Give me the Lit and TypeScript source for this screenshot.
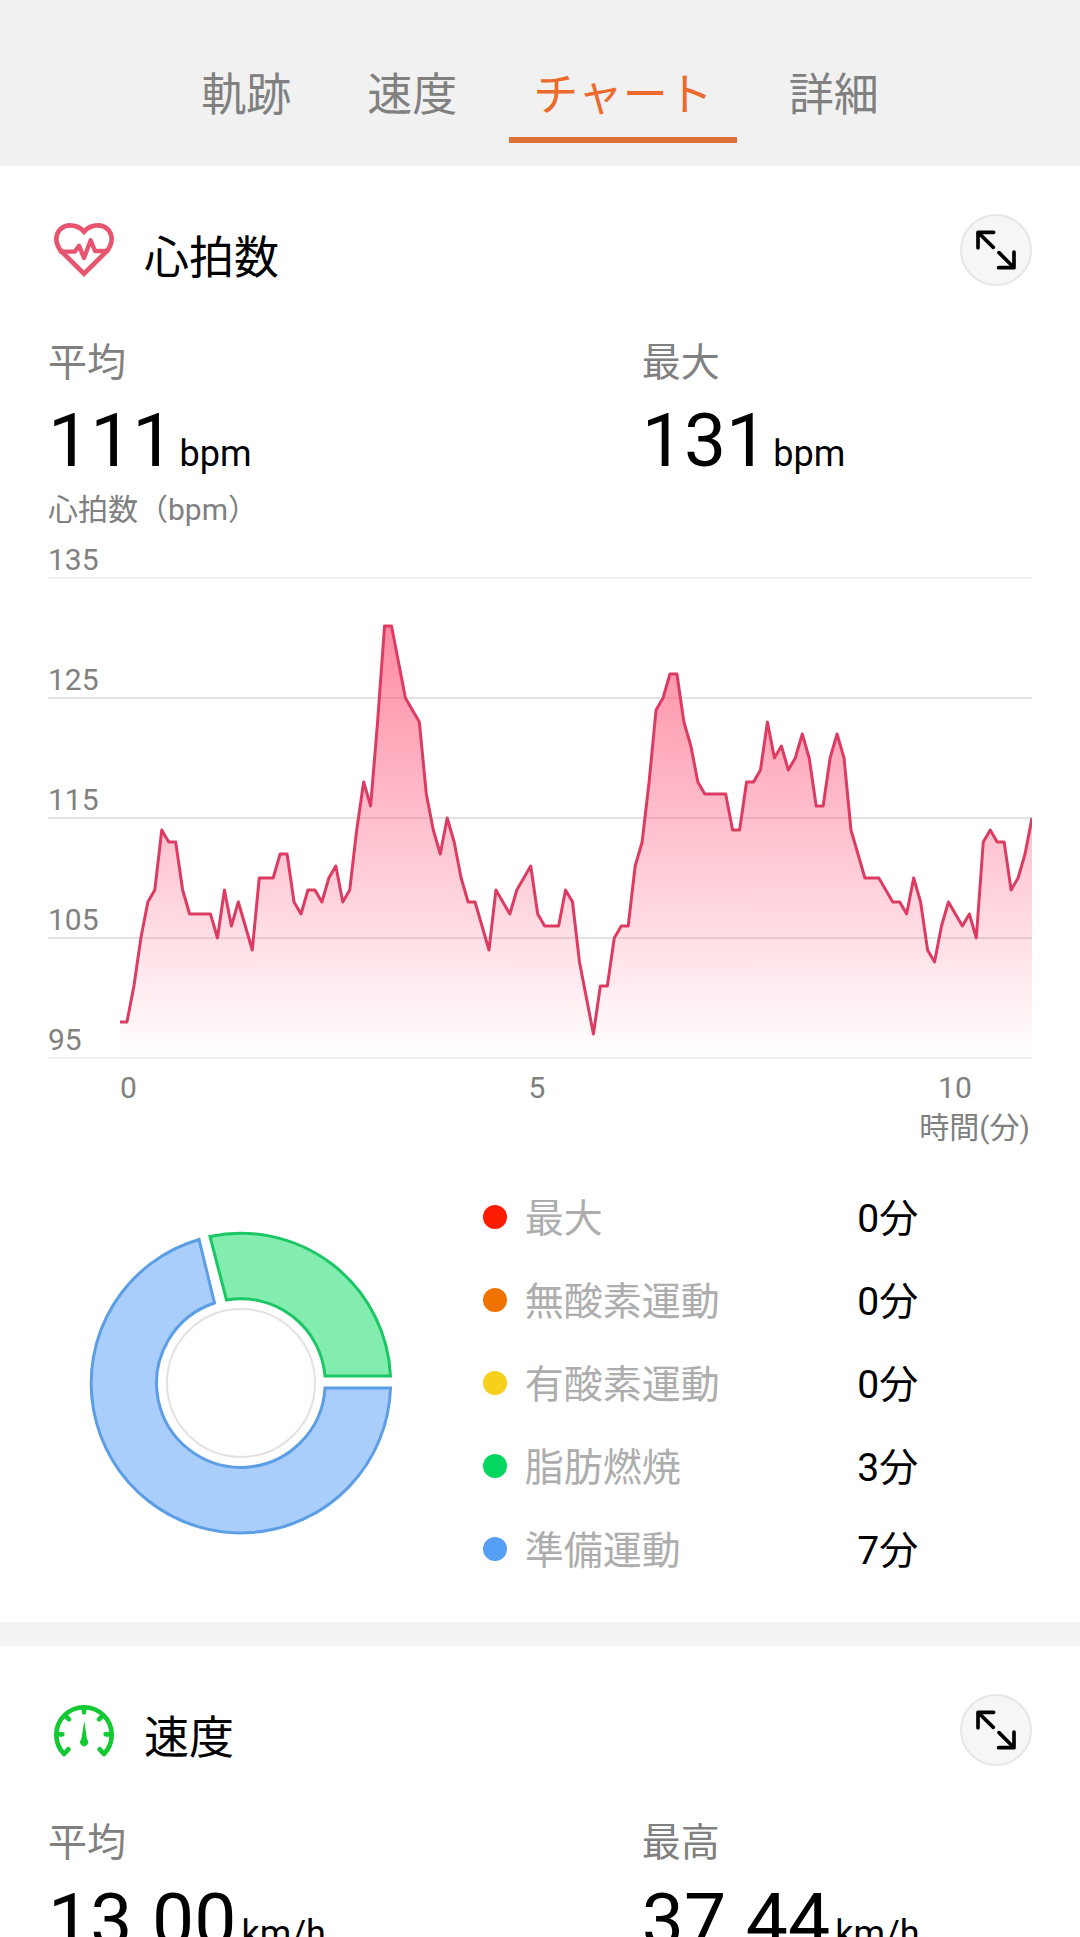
import { LitElement, html, css, svg } from "lit";
import { customElement, property, state } from "lit/decorators.js";
import { classMap } from "lit/directives/class-map.js";

const TABS = ["軌跡", "速度", "チャート", "詳細"];

interface Stat {
  label: string;
  value: string;
  unit: string;
}

const HEART_STATS: Stat[] = [
  { label: "平均", value: "111", unit: "bpm" },
  { label: "最大", value: "131", unit: "bpm" },
];

const SPEED_STATS: Stat[] = [
  { label: "平均", value: "13.00", unit: "km/h" },
  { label: "最高", value: "37.44", unit: "km/h" },
];

const ZONES = [
  { name: "最大", minutes: 0, tone: "max" },
  { name: "無酸素運動", minutes: 0, tone: "anaerobic" },
  { name: "有酸素運動", minutes: 0, tone: "aerobic" },
  { name: "脂肪燃焼", minutes: 3, tone: "burn" },
  { name: "準備運動", minutes: 7, tone: "warmup" },
];

/* Heart rate samples, evenly spaced in time. */
const BPM = [
  98, 98, 101, 105, 108, 109, 114, 113, 113, 109, 107, 107, 107, 107, 105, 109, 106, 108, 106, 104,
  110, 110, 110, 112, 112, 108, 107, 109, 109, 108, 110, 111, 108, 109, 114, 118, 116, 123, 131, 131,
  128, 125, 124, 123, 117, 114, 112, 115, 113, 110, 108, 108, 106, 104, 109, 108, 107, 109, 110, 111,
  107, 106, 106, 106, 109, 108, 103, 100, 97, 101, 101, 105, 106, 106, 111, 113, 118, 124, 125, 127,
  127, 123, 121, 118, 117, 117, 117, 117, 114, 114, 118, 118, 119, 123, 120, 121, 119, 120, 122, 120,
  116, 116, 120, 122, 120, 114, 112, 110, 110, 110, 109, 108, 108, 107, 110, 108, 104, 103, 106, 108,
  107, 106, 107, 105, 113, 114, 113, 113, 109, 110, 112, 115,
];

const BPM_TICKS = [135, 125, 115, 105, 95];

@customElement("stat-pair")
class StatPair extends LitElement {
  @property({ attribute: false }) stats: Stat[] = [];

  static styles = css`
    :host {
      display: block;
    }
    .stats {
      display: grid;
      grid-template-columns: 35fr 23fr;
      margin: 0;
    }
    .label {
      font-size: 39px;
      line-height: 56px;
      color: #808080;
    }
    .reading {
      margin: 0;
      font-size: 75px;
      line-height: 99px;
      white-space: nowrap;
    }
    .unit {
      margin-left: 5px;
      font-size: 36px;
      line-height: 40px;
    }
  `;

  render() {
    return html`<dl class="stats">
      ${this.stats.map(
        (s) => html`<div>
          <dt class="label">${s.label}</dt>
          <dd class="reading">${s.value}<span class="unit">${s.unit}</span></dd>
        </div>`
      )}
    </dl>`;
  }
}

@customElement("card-heading")
class CardHeading extends LitElement {
  @property() heading = "";

  static styles = css`
    :host {
      display: flex;
      align-items: center;
      height: 72px;
      padding-left: 4px;
      margin-bottom: 49px;
    }
    .title {
      flex: 1;
      margin: 0;
      padding: 18px 0 0 28px;
      font-size: 45px;
      line-height: 54px;
      font-weight: 400;
    }
    .expand {
      display: grid;
      place-items: center;
      width: 72px;
      height: 72px;
      padding: 0;
      border: 2px solid #e6e6e6;
      border-radius: 50%;
      background: #f6f6f6;
      color: #000;
    }
    .arrows {
      display: block;
      width: 40px;
      height: 40px;
      fill: none;
      stroke: currentColor;
      stroke-width: 11;
      stroke-linecap: round;
      stroke-linejoin: round;
    }
  `;

  render() {
    return html`
      <slot></slot>
      <h2 class="title">${this.heading}</h2>
      <button class="expand" type="button" aria-label="拡大">
        <svg class="arrows" viewBox="108 90 120 120" aria-hidden="true">
          <path d="M114 143V97H161M116 99L160 142M222 156V203H176M220 201L177 158" />
        </svg>
      </button>
    `;
  }
}

@customElement("heart-chart")
class HeartChart extends LitElement {
  static styles = css`
    :host {
      display: block;
      color: #808080;
    }
    .caption {
      font-size: 30px;
      line-height: 40px;
    }
    .chart {
      position: relative;
    }
    .tick {
      display: flex;
      align-items: flex-end;
      box-sizing: border-box;
      height: 120px;
      border-bottom: 2px solid #e3e3e3;
      font-size: 30px;
      line-height: 34px;
    }
    .tick:first-child {
      height: 49px;
    }
    .tick.edge {
      border-color: #f1f1f1;
    }
    .plot {
      position: absolute;
      inset: 48px 0 1px 72px;
    }
    .curve {
      display: block;
      width: 100%;
      height: 100%;
    }
    .line {
      fill: none;
      stroke: #dc3c62;
      stroke-width: 3;
      stroke-linejoin: round;
      vector-effect: non-scaling-stroke;
    }
    .axis {
      display: grid;
      grid-template-columns: 208fr 417fr 132fr 154fr;
      padding: 9px 0 0 72px;
      font-size: 30px;
      line-height: 40px;
    }
    .mid {
      text-align: center;
    }
    .last {
      grid-column: 4;
      text-align: center;
    }
    .time {
      padding-right: 2px;
      text-align: right;
    }
  `;

  render() {
    const last = BPM.length - 1;
    const points = BPM.map((v, i) => `${i},${135 - v}`).join(" ");
    return html`
      <div class="caption">心拍数（bpm）</div>
      <div class="chart">
        ${BPM_TICKS.map(
          (t, i) =>
            html`<div class=${classMap({ tick: true, edge: i === 0 || i === BPM_TICKS.length - 1 })}>${t}</div>`
        )}
        <div class="plot">
          <svg class="curve" viewBox="0 0 ${last} 40" preserveAspectRatio="none" aria-hidden="true">
            ${svg`
              <defs>
                <linearGradient id="fade" gradientUnits="userSpaceOnUse" x1="0" y1="4" x2="0" y2="40">
                  <stop offset="0" stop-color="#ff4a70" stop-opacity="0.64" />
                  <stop offset="1" stop-color="#ff4a70" stop-opacity="0" />
                </linearGradient>
              </defs>
              <polygon fill="url(#fade)" points="0,40 ${points} ${last},40" />
              <polyline class="line" points=${points} />
            `}
          </svg>
        </div>
      </div>
      <div class="axis">
        <span>0</span>
        <span class="mid">5</span>
        <span class="last">10</span>
      </div>
      <div class="caption time">時間(分)</div>
    `;
  }
}

@customElement("zone-summary")
class ZoneSummary extends LitElement {
  static styles = css`
    :host {
      display: grid;
      grid-template-columns: 19fr 24fr;
      align-items: center;
      margin-top: 27px;
    }
    .donut {
      display: block;
      width: 304px;
      height: 304px;
      margin-left: 41px;
      stroke-width: 3;
    }
    .hole {
      fill: none;
      stroke: #e6e0e1;
      stroke-width: 2;
    }
    .slice-burn {
      fill: #82edae;
      stroke: #1bc765;
    }
    .slice-warmup {
      fill: #aacefb;
      stroke: #5c9ee5;
    }
    .zones {
      margin: 0;
      padding: 0;
      list-style: none;
    }
    .zone {
      display: grid;
      grid-template-columns: 24px 9fr 5fr;
      column-gap: 18px;
      align-items: center;
      height: 83px;
      font-size: 39px;
      line-height: 56px;
    }
    .dot {
      width: 24px;
      height: 24px;
      border-radius: 50%;
    }
    .max {
      background: #fc1c00;
    }
    .anaerobic {
      background: #f07300;
    }
    .aerobic {
      background: #f6d01c;
    }
    .burn {
      background: #04d65f;
    }
    .warmup {
      background: #559ff5;
    }
    .name,
    .minutes {
      padding-top: 4px;
    }
    .name {
      color: #adadad;
    }
  `;

  render() {
    return html`
      <svg class="donut" viewBox="-152 -152 304 304" role="img" aria-label="心拍ゾーン">
        <circle class="hole" r="74" />
        <path
          class="slice-burn"
          d="M-31 -146.5A149.7 149.7 0 0 1 149.5 -7H84A84.3 84.3 0 0 0 -14.5 -83Z"
        />
        <path
          class="slice-warmup"
          d="M-42 -143.5A149.7 149.7 0 1 0 149.5 5H84A84.3 84.3 0 1 1 -26.5 -80Z"
        />
      </svg>
      <ul class="zones">
        ${ZONES.map(
          (z) => html`<li class="zone">
            <span class="dot ${z.tone}"></span>
            <span class="name">${z.name}</span>
            <span class="minutes">${z.minutes}分</span>
          </li>`
        )}
      </ul>
    `;
  }
}

@customElement("app-root")
class AppRoot extends LitElement {
  @state() private active = 2;

  static styles = css`
    :host {
      display: flex;
      flex-direction: column;
      height: 100vh;
      background: #fff;
      color: #000;
      font-family: Roboto, "Noto Sans CJK JP", sans-serif;
    }
    .tabs {
      display: flex;
      flex: none;
      justify-content: center;
      gap: 28px;
      padding: 51px 0 23px;
      background: #f1f1f1;
    }
    .tab {
      padding: 4px 24px 0;
      border: 0;
      border-bottom: 6px solid transparent;
      background: none;
      font: inherit;
      font-size: 45px;
      line-height: 82px;
      color: #808080;
    }
    .tab.active {
      border-color: #e07038;
      color: #ed6a2c;
    }
    .content {
      flex: 1;
      min-height: 0;
      overflow-y: auto;
      scrollbar-width: none;
    }
    .card {
      padding: 48px 48px 32px;
    }
    .card + .card {
      border-top: 24px solid #f3f3f3;
    }
    .icon {
      display: block;
      width: 64px;
      height: 60px;
      fill: none;
      stroke-linecap: round;
    }
    .heart {
      stroke: #e6546f;
      stroke-width: 14;
    }
    .pulse {
      stroke-width: 13;
    }
    .gauge {
      stroke: #12c932;
      stroke-width: 14;
      stroke-linejoin: round;
    }
    .needle {
      fill: #12c932;
      stroke: none;
    }
  `;

  render() {
    return html`
      <nav class="tabs" role="tablist">
        ${TABS.map(
          (t, i) => html`<button
            type="button"
            role="tab"
            aria-selected=${i === this.active ? "true" : "false"}
            class=${classMap({ tab: true, active: i === this.active })}
            @click=${() => (this.active = i)}
          >${t}</button>`
        )}
      </nav>
      <main class="content">
        <section class="card">
          <card-heading heading="心拍数">
            <svg class="icon heart" viewBox="66 60 192 180" aria-hidden="true">
              <path
                d="M162 95C151 82 136 76 120 76C96 76 79 95 79 118C79 134 86 146 98 158L162 221L226 158C238 146 245 134 245 118C245 95 228 76 204 76C188 76 173 82 162 95Z"
              />
              <path class="pulse" stroke-linejoin="round" d="M92 155H134L147 137L162 174L182 121L195 153H232" />
            </svg>
          </card-heading>
          <stat-pair .stats=${HEART_STATS}></stat-pair>
          <heart-chart></heart-chart>
          <zone-summary></zone-summary>
        </section>
        <section class="card">
          <card-heading heading="速度">
            <svg class="icon gauge" viewBox="66 62 192 180" aria-hidden="true">
              <path
                d="M115 210L102 224A83 83 0 1 1 222 224L209 210M162 84V99M105 108L117 120M219 108L207 120M82 165H97M242 165H227"
              />
              <path class="needle" d="M163 124L171 180A12 12 0 1 1 154 180Z" />
            </svg>
          </card-heading>
          <stat-pair .stats=${SPEED_STATS}></stat-pair>
        </section>
      </main>
    `;
  }
}
